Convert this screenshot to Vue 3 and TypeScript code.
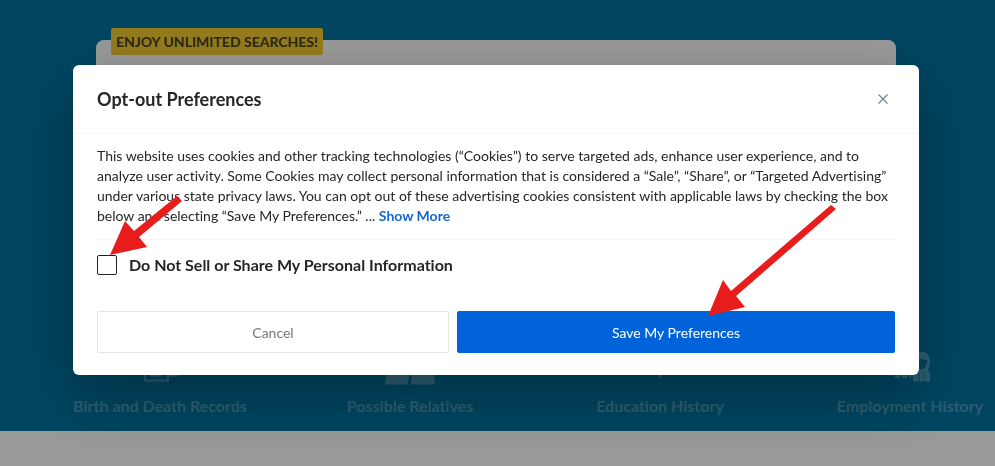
<script setup lang="ts">
import { ref } from 'vue'

type IconName = 'records' | 'people' | 'education' | 'employment'

const features: { label: string; icon: IconName }[] = [
  { label: 'Birth and Death Records', icon: 'records' },
  { label: 'Possible Relatives', icon: 'people' },
  { label: 'Education History', icon: 'education' },
  { label: 'Employment History', icon: 'employment' },
]

const optOut = ref(false)
</script>

<template>
  <div class="page">
    <main class="hero">
      <section class="search-card">
        <span class="badge">ENJOY UNLIMITED SEARCHES!</span>
      </section>
      <ul class="features">
        <li v-for="item in features" :key="item.label" class="feature">
          <svg v-if="item.icon === 'records'" class="feature-icon" viewBox="0 0 52 44" aria-hidden="true">
            <path d="M11 14h23v26H11zM19 14V4h24v31h-9M16 35h12M16 28h12" fill="none" stroke="currentColor" stroke-width="2" />
          </svg>
          <svg v-else-if="item.icon === 'people'" class="feature-icon" viewBox="0 0 52 44" aria-hidden="true">
            <circle cx="14" cy="15" r="9" fill="currentColor" />
            <circle cx="38" cy="15" r="9" fill="currentColor" />
            <path d="M1 44c0-12 6-18 13-18 5 0 9 2 13 6-2 3-3 7-3 12zM27 44c0-12 5-18 12-18s12 6 12 18z" fill="currentColor" />
          </svg>
          <svg v-else-if="item.icon === 'education'" class="feature-icon" viewBox="0 0 52 44" aria-hidden="true">
            <path d="M2 13 26 3l24 10-24 10zM10 19v8q16 9 32 0v-8l-16 7zM24 29h3v8h-3z" fill="currentColor" />
          </svg>
          <svg v-else class="feature-icon" viewBox="0 0 52 44" aria-hidden="true">
            <path d="M8 16h22v18H8z" fill="currentColor" />
            <path d="M11 36h16" stroke="currentColor" stroke-width="3" stroke-dasharray="5 2" />
            <path d="M29 26c-1-10 2-15 8-15 6 0 9 4 9 11 0 4-2 6-2 8l2 2v9H29v-9l4-3zM33 19c-1 8 2 10 4 10s7-3 6-10c-4 1-7-2-10 0z" fill="currentColor" fill-rule="evenodd" />
            <path d="M35 31v10M40 31v10" stroke="#0074a0" stroke-dasharray="2 1" />
          </svg>
          <span>{{ item.label }}</span>
        </li>
      </ul>
    </main>

    <div class="overlay">
      <form class="modal" role="dialog" aria-modal="true" aria-labelledby="modal-title" @submit.prevent>
        <header class="modal-header">
          <h2 id="modal-title">Opt-out Preferences</h2>
          <button class="close" type="button" aria-label="Close">
            <svg viewBox="0 0 10 10" aria-hidden="true">
              <path d="M.5.5l9 9M9.500.5l-9 9" fill="none" stroke="currentColor" stroke-width="1.200" />
            </svg>
          </button>
        </header>
        <div class="modal-body">
          <p class="notice">
            This website uses cookies and other tracking technologies (“Cookies”) to serve targeted ads,
            enhance user experience, and to analyze user activity. Some Cookies may collect personal
            information that is considered a “Sale”, “Share”, or “Targeted Advertising” under various
            state privacy laws. You can opt out of these advertising cookies consistent with applicable
            laws by checking the box below and selecting “Save My Preferences.” ...
            <a href="#more">Show More</a>
          </p>
          <label class="choice">
            <input v-model="optOut" type="checkbox" />
            <span>Do Not Sell or Share My Personal Information</span>
          </label>
          <div class="actions">
            <button class="cancel" type="button">Cancel</button>
            <button class="save" type="submit">Save My Preferences</button>
          </div>
        </div>
        <svg class="arrow arrow-choice" viewBox="110 195 74 61" aria-hidden="true">
          <path d="M110 255 125 221 134 231 177 196 182 201 139 237 147 247Z" fill="#e91c1c" />
        </svg>
        <svg class="arrow arrow-save" viewBox="708 204 130 113" aria-hidden="true">
          <path d="M708 316 723 280 731 291 831 205 836 209 736 296 745 307Z" fill="#e91c1c" />
        </svg>
      </form>
    </div>
  </div>
</template>

<style>
body {
  margin: 0;
}
</style>

<style scoped>
* {
  box-sizing: border-box;
}

.page {
  min-height: 100vh;
  overflow: hidden;
  background: #ffffff;
  font-family: Lato, "Liberation Sans", sans-serif;
  font-variant-ligatures: none;
  color: #262626;
}

.hero {
  padding: 40px 0 16px;
  background: #0074a0;
}

.search-card {
  height: 300px;
  margin: 0 99px 0 96px;
  border-radius: 8px;
  background: #ffffff;
}

.badge {
  position: relative;
  top: -12px;
  display: inline-block;
  margin-left: 15px;
  padding: 0 5px;
  border-radius: 2px;
  background: #f7cd30;
  color: #4a4020;
  font-size: 14px;
  font-weight: 700;
  line-height: 27px;
}

.features {
  display: grid;
  grid-template-columns: repeat(4, 250px);
  margin: 0;
  padding: 0 0 0 35px;
  list-style: none;
  color: rgba(255, 255, 255, 0.3);
}

.feature {
  display: flex;
  flex-direction: column;
  align-items: center;
  gap: 12px;
  font-size: 16px;
  font-weight: 700;
  line-height: 18px;
}

.feature-icon {
  width: 52px;
  height: 45px;
}

.overlay {
  position: fixed;
  inset: 0;
  padding: 65px 76px 0 73px;
  background: rgba(0, 0, 0, 0.4);
}

.modal {
  position: relative;
  border-radius: 6px;
  background: #ffffff;
  box-shadow: 0 20px 60px rgba(0, 0, 0, 0.3);
}

.modal-header {
  display: flex;
  align-items: center;
  justify-content: space-between;
  padding: 20px 24px;
  border-bottom: 1px solid #f4f5f6;
}

h2 {
  margin: 0;
  font-size: 18px;
  font-weight: 700;
  line-height: 28px;
}

.close {
  display: flex;
  align-items: center;
  justify-content: center;
  width: 24px;
  height: 24px;
  padding: 0;
  border: 0;
  background: none;
  color: #74808e;
}

.close svg {
  width: 10px;
  height: 10px;
}

.modal-body {
  padding: 12px 24px 22px;
}

.notice {
  margin: 0;
  padding-bottom: 13px;
  border-bottom: 1px solid #f4f5f6;
  font-size: 14px;
  line-height: 20px;
}

a {
  color: #1668d0;
  font-weight: 700;
  text-decoration: none;
}

.choice {
  display: flex;
  align-items: center;
  gap: 12px;
  width: fit-content;
  margin-top: 13px;
  font-size: 16px;
  font-weight: 700;
  line-height: 24px;
}

.choice input {
  appearance: none;
  width: 20px;
  height: 20px;
  margin: 0;
  border: 1px solid #222222;
  border-radius: 2px;
  background: #ffffff;
}

.choice input:checked {
  background: #0063da;
}

.actions {
  display: grid;
  grid-template-columns: 352fr 438fr;
  gap: 8px;
  margin-top: 34px;
}

.actions button {
  height: 42px;
  border-radius: 2px;
  font-family: inherit;
  font-size: 14px;
}

.cancel {
  border: 1px solid #e4e6e8;
  background: #ffffff;
  color: #777777;
}

.save {
  border: 0;
  background: #0063da;
  color: #ffffff;
}

.arrow {
  position: absolute;
  pointer-events: none;
}

.arrow-choice {
  top: 130px;
  left: 37px;
  width: 74px;
  height: 61px;
}

.arrow-save {
  top: 139px;
  right: 81px;
  width: 130px;
  height: 113px;
}
</style>
